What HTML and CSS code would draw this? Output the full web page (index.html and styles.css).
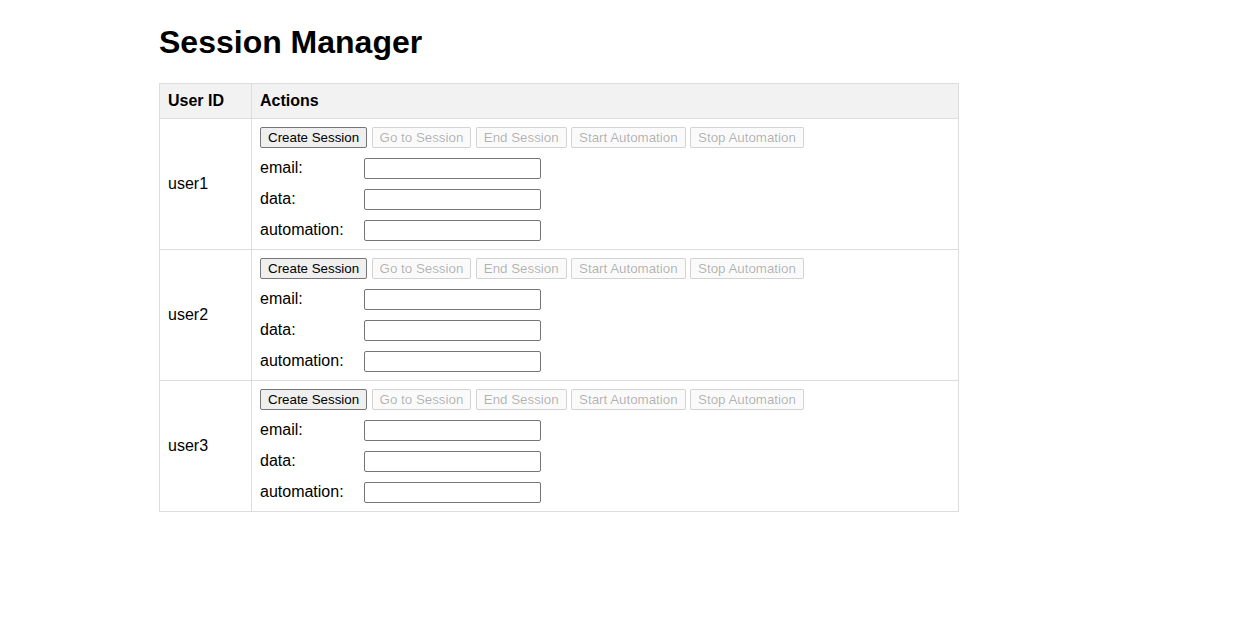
FILE: index.html
```html
<!DOCTYPE html>
<html>
<head>
<meta charset="utf-8">
<link rel="stylesheet" href="styles.css">
</head>
<body>
<div class="page">
  <h1 class="title">Session Manager</h1>
  <table class="sessions">
    <thead>
      <tr><th class="col-user">User ID</th><th>Actions</th></tr>
    </thead>
    <tbody>
      <tr>
        <td class="user">user1</td>
        <td class="actions">
          <div class="buttons"><button class="btn">Create Session</button> <button class="btn" disabled>Go to Session</button> <button class="btn" disabled>End Session</button> <button class="btn" disabled>Start Automation</button> <button class="btn" disabled>Stop Automation</button></div>
          <div class="field"><label class="lbl">email:</label><input class="inp" type="text"></div>
          <div class="field"><label class="lbl">data:</label><input class="inp" type="text"></div>
          <div class="field"><label class="lbl">automation:</label><input class="inp" type="text"></div>
        </td>
      </tr>
      <tr>
        <td class="user">user2</td>
        <td class="actions">
          <div class="buttons"><button class="btn">Create Session</button> <button class="btn" disabled>Go to Session</button> <button class="btn" disabled>End Session</button> <button class="btn" disabled>Start Automation</button> <button class="btn" disabled>Stop Automation</button></div>
          <div class="field"><label class="lbl">email:</label><input class="inp" type="text"></div>
          <div class="field"><label class="lbl">data:</label><input class="inp" type="text"></div>
          <div class="field"><label class="lbl">automation:</label><input class="inp" type="text"></div>
        </td>
      </tr>
      <tr>
        <td class="user">user3</td>
        <td class="actions">
          <div class="buttons"><button class="btn">Create Session</button> <button class="btn" disabled>Go to Session</button> <button class="btn" disabled>End Session</button> <button class="btn" disabled>Start Automation</button> <button class="btn" disabled>Stop Automation</button></div>
          <div class="field"><label class="lbl">email:</label><input class="inp" type="text"></div>
          <div class="field"><label class="lbl">data:</label><input class="inp" type="text"></div>
          <div class="field"><label class="lbl">automation:</label><input class="inp" type="text"></div>
        </td>
      </tr>
    </tbody>
  </table>
</div>
</body>
</html>
```
FILE: styles.css
```css
html, body {
  margin: 0;
  padding: 0;
  background: #fff;
}
body {
  font-family: "Liberation Sans", Arial, sans-serif;
  font-size: 16px;
  color: #000;
}
.page {
  margin-left: 159px;
  width: 800px;
}
.title {
  font-size: 32px;
  font-weight: bold;
  line-height: 37px;
  margin: 24px 0 22px 0;
}
.sessions {
  width: 800px;
  border-collapse: collapse;
}
.sessions th,
.sessions td {
  border: 1px solid #ddd;
  padding: 8px;
  text-align: left;
  line-height: 18px;
}
.sessions th {
  background: #f2f2f2;
  font-weight: bold;
}
.col-user {
  width: 75px;
}
.user {
  vertical-align: middle;
}
.buttons {
  height: 21px;
  line-height: 21px;
  white-space: nowrap;
}
.btn {
  font-family: "Liberation Sans", Arial, sans-serif;
  font-size: 13.333px;
  height: 21px;
  padding: 1px 7px;
  margin: 0;
  border: 1px solid #767676;
  border-radius: 2px;
  background: #efefef;
  color: #000;
  box-sizing: border-box;
  vertical-align: top;
  line-height: 17px;
}
.btn:disabled {
  color: rgba(16, 16, 16, 0.32);
  border-color: rgba(118, 118, 118, 0.3);
  background: rgba(239, 239, 239, 0.3);
}
.field {
  display: flex;
  align-items: center;
  height: 21px;
  margin-top: 10px;
}
.lbl {
  width: 104px;
  flex: none;
  margin-top: -2px;
}
.inp {
  box-sizing: border-box;
  width: 177px;
  height: 21px;
  margin: 0;
  padding: 1px 2px;
  border: 1px solid #767676;
  border-radius: 2px;
  font-family: "Liberation Sans", Arial, sans-serif;
  font-size: 13.333px;
  background: #fff;
}
```
